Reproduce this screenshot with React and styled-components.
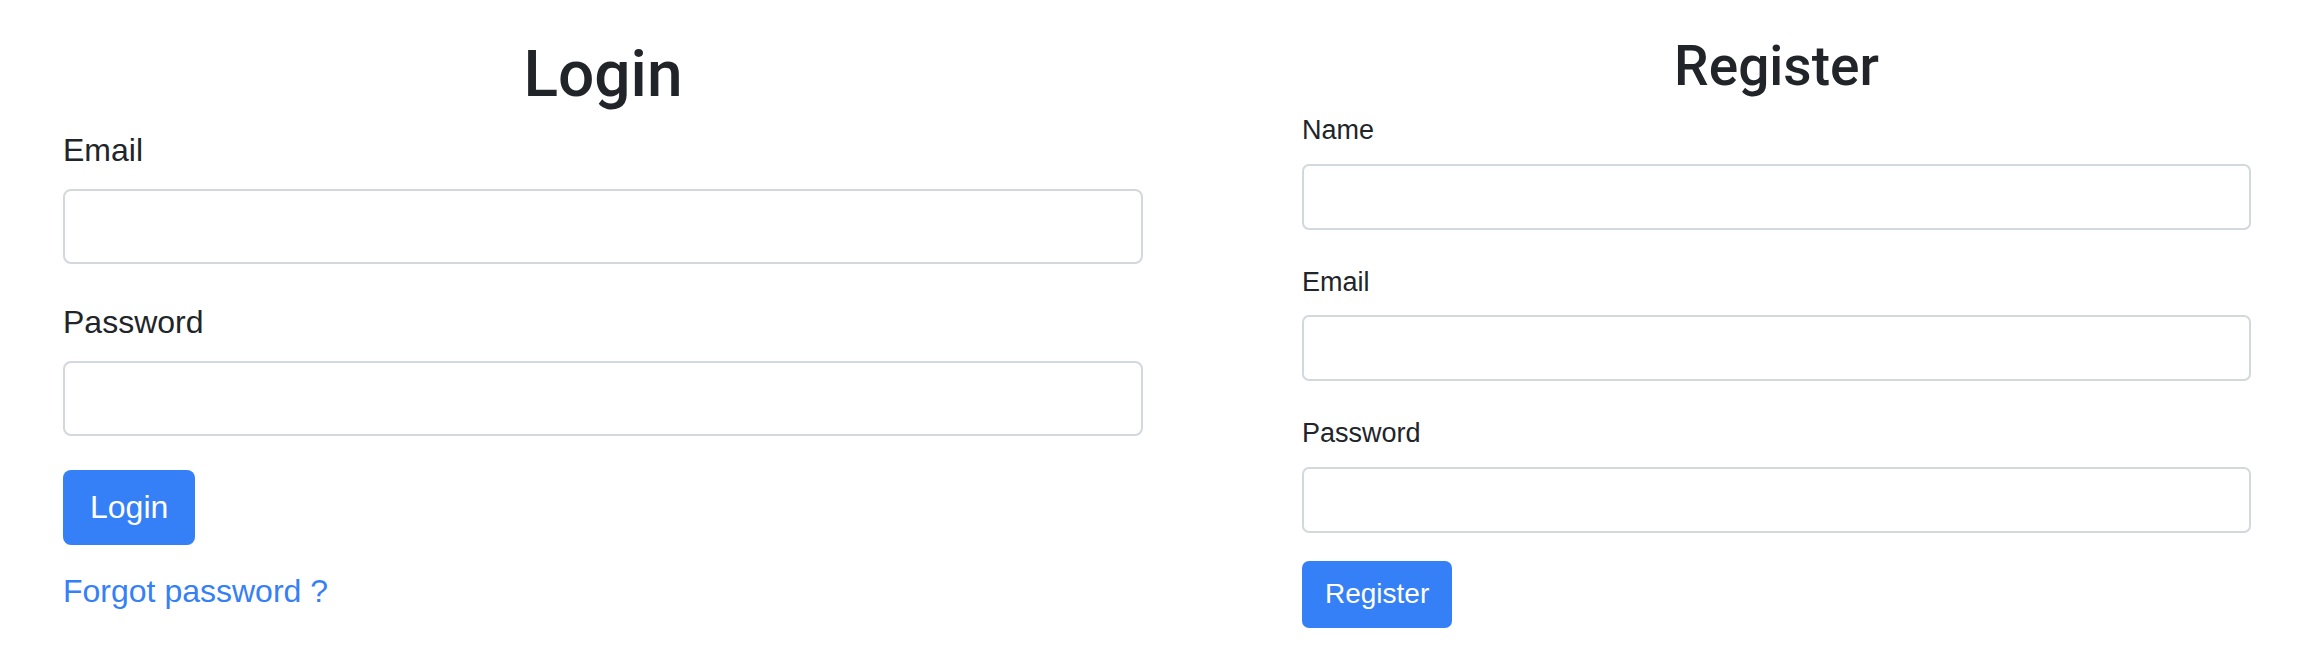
import React from 'react'
import styled, { createGlobalStyle } from 'styled-components'

const GlobalStyle = createGlobalStyle`
  html, body {
    margin: 0;
    background: #fff;
  }
  body {
    font-family: "Liberation Sans", Arial, sans-serif;
    color: #212529;
  }
  * {
    box-sizing: border-box;
  }
`

// the two forms are rendered at different scales in the reference
const sizes = {
  login: {
    width: 1080, title: 64, titleTop: 37, titleGap: 12,
    label: 32, labelGap: 15, input: 75, radius: 8, fieldGap: 34,
    btnGap: 34, btn: 75, btnPad: 27, btnFont: 32,
  },
  register: {
    width: 949, title: 55, titleTop: 33, titleGap: 11,
    label: 27, labelGap: 13, input: 66, radius: 7, fieldGap: 32,
    btnGap: 28, btn: 67, btnPad: 23, btnFont: 28,
  },
}

const Page = styled.main`
  display: flex;
  justify-content: space-between;
  align-items: flex-start;
  padding: 0 65px 0 63px;
`

const Panel = styled.section`
  width: ${props => props.$s.width}px;
  padding-top: ${props => props.$s.titleTop}px;
`

const Title = styled.h1`
  margin: 0 0 ${props => props.$s.titleGap}px;
  text-align: center;
  font-family: Roboto, "Liberation Sans", sans-serif;
  font-weight: 500;
  font-size: ${props => props.$s.title}px;
  line-height: 1.2;
  color: #212529;
`

const Field = styled.div`
  margin-bottom: ${props => props.$s.fieldGap}px;
`

const Label = styled.label`
  display: block;
  margin-bottom: ${props => props.$s.labelGap}px;
  font-size: ${props => props.$s.label}px;
  line-height: 1.5;
`

const Input = styled.input`
  display: block;
  width: 100%;
  height: ${props => props.$s.input}px;
  padding: 0 20px;
  border: 2px solid #d3d8dd;
  border-radius: ${props => props.$s.radius}px;
  background: #fff;
  font: inherit;
  outline: none;
`

const Button = styled.button`
  display: block;
  height: ${props => props.$s.btn}px;
  padding: 0 ${props => props.$s.btnPad}px;
  margin-top: ${props => props.$s.btnGap - props.$s.fieldGap}px;
  border: none;
  border-radius: ${props => props.$s.radius}px;
  background: #3580f6;
  color: #fff;
  font-family: "Liberation Sans", Arial, sans-serif;
  font-size: ${props => props.$s.btnFont}px;
  line-height: 1.5;
  cursor: pointer;
`

const Link = styled.a`
  display: inline-block;
  margin-top: 22px;
  font-size: 32px;
  line-height: 1.5;
  color: #3580f6;
  text-decoration: none;
`

const Form = ({ title, fields, action, s, children }) => (
  <Panel $s={s}>
    <Title $s={s}>{title}</Title>
    {fields.map(f => (
      <Field key={f.name} $s={s}>
        <Label $s={s} htmlFor={title + f.name}>{f.label}</Label>
        <Input $s={s} id={title + f.name} type={f.type} />
      </Field>
    ))}
    <Button $s={s}>{action}</Button>
    {children}
  </Panel>
)

const App = () => (
  <>
    <GlobalStyle />
    <Page>
      <Form
        title="Login"
        action="Login"
        s={sizes.login}
        fields={[
          { name: 'email', label: 'Email', type: 'email' },
          { name: 'password', label: 'Password', type: 'password' },
        ]}
      >
        <Link href="#">Forgot password ?</Link>
      </Form>
      <Form
        title="Register"
        action="Register"
        s={sizes.register}
        fields={[
          { name: 'name', label: 'Name', type: 'text' },
          { name: 'email', label: 'Email', type: 'email' },
          { name: 'password', label: 'Password', type: 'password' },
        ]}
      />
    </Page>
  </>
)

export default App
